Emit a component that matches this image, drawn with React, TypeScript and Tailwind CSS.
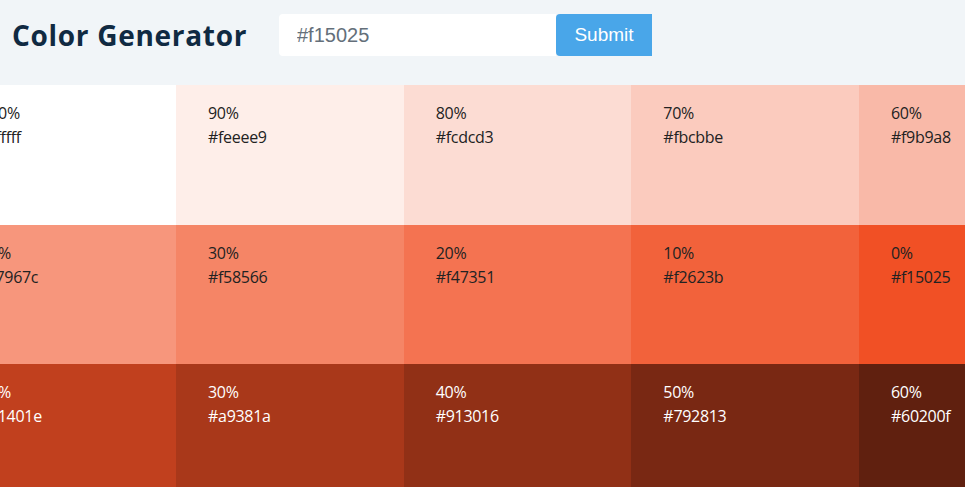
import { useMemo, useState } from "react";

const BASE = "#f15025";

function toRgb(hex: string) {
  const h = hex.replace("#", "");
  return [0, 2, 4].map((i) => parseInt(h.slice(i, i + 2), 16));
}

function toHex(rgb: number[]) {
  return "#" + rgb.map((c) => Math.round(c).toString(16).padStart(2, "0")).join("");
}

// tints 100..10, base, shades 10..100 (same as values.js with weight 10)
function buildList(hex: string) {
  const rgb = toRgb(hex);
  const out: { weight: number; hex: string; dark: boolean }[] = [];
  for (let w = 100; w >= 10; w -= 10) {
    out.push({ weight: w, hex: toHex(rgb.map((c) => c + (255 - c) * (w / 100))), dark: false });
  }
  out.push({ weight: 0, hex: toHex(rgb), dark: false });
  for (let w = 10; w <= 100; w += 10) {
    out.push({ weight: w, hex: toHex(rgb.map((c) => c * (1 - w / 100))), dark: true });
  }
  return out;
}

export default function App() {
  const [color, setColor] = useState(BASE);
  const list = useMemo(() => buildList(BASE), []);

  return (
    <div className="w-[965px] h-[487px] overflow-hidden bg-white">
      <header className="h-[85px] bg-[#f1f5f8] flex items-center pl-3 pb-[15px]">
        <h3
          className="w-[267px] shrink-0 text-[28px] font-bold text-[#102a42] tracking-[0.7px] leading-none"
          style={{ fontFamily: '"Open Sans", "Noto Sans", sans-serif' }}
        >
          Color Generator
        </h3>
        <form className="flex" onSubmit={(e) => e.preventDefault()}>
          <input
            value={color}
            onChange={(e) => setColor(e.target.value)}
            className="w-[277px] h-[42px] bg-white rounded-l-[4px] pl-[18px] text-[20px] text-[#646f7a] outline-none"
            style={{ fontFamily: '"Liberation Sans", Arial, sans-serif' }}
          />
          <button
            type="submit"
            className="w-[96px] h-[42px] bg-[#49a6e9] text-white text-[19px] rounded-l-[4px]"
            style={{ fontFamily: '"Liberation Sans", Arial, sans-serif' }}
          >
            Submit
          </button>
        </form>
      </header>

      <section className="grid grid-cols-6 w-[1366px] ml-[-51.67px]">
        {list.map((c, i) => (
          <article
            key={i}
            className={`h-[139.5px] px-8 py-4 text-[16px] leading-6 tracking-[-0.3px] ${c.dark ? "text-white" : "text-[#222222]"}`}
            style={{ backgroundColor: c.hex, fontFamily: '"Open Sans", "Noto Sans", sans-serif' }}
          >
            <p>{c.weight}%</p>
            <p>{c.hex}</p>
          </article>
        ))}
      </section>
    </div>
  );
}
